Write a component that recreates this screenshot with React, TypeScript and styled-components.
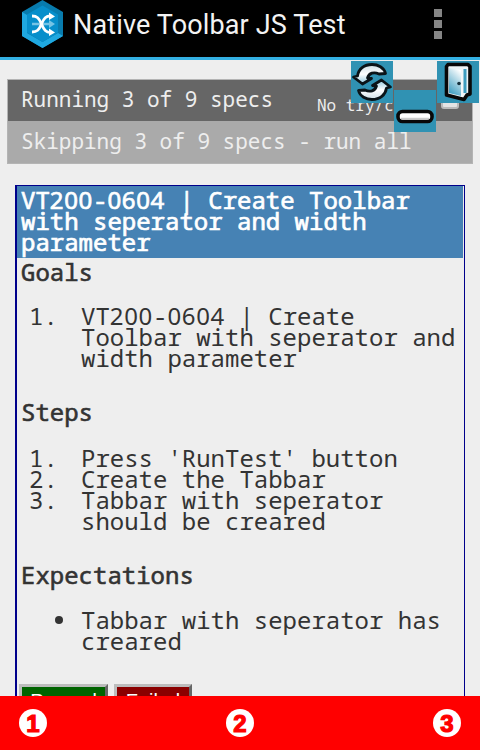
import React from "react";
import styled, { createGlobalStyle } from "styled-components";

const GlobalStyle = createGlobalStyle`
  * { box-sizing: border-box; }
  html, body { margin: 0; padding: 0; background: #eee; overflow: hidden; }
`;

const mono = `"Droid Sans Mono", "Noto Sans Mono", "DejaVu Sans Mono", monospace`;

const Screen = styled.div`
  position: relative;
  display: flex;
  flex-direction: column;
  width: 480px;
  height: 750px;
  overflow: hidden;
  background: #eee;
  color: #333;
  font-family: ${mono};
`;

const ActionBar = styled.header`
  flex: none;
  display: flex;
  align-items: flex-start;
  height: 60px;
  padding-left: 21px;
  background: #000;
  border-bottom: 3px solid #33b0e3;
`;

const AppIcon = styled.svg`
  flex: none;
  width: 43px;
  height: 48px;
`;

const AppTitle = styled.h1`
  flex: 1;
  margin: 0 0 0 9px;
  font: 400 27px/51px Roboto, sans-serif;
  letter-spacing: 0.14px;
  color: #f3f3f3;
  white-space: nowrap;
`;

const Overflow = styled.div`
  display: flex;
  flex-direction: column;
  gap: 3px;
  margin: 9px 38px 0 0;
`;

const Dot = styled.i`
  width: 8px;
  height: 8px;
  background: #858585;
`;

const Page = styled.main`
  flex: 1;
  min-height: 0;
  overflow: hidden;
  padding: 19px 15px 0;
`;

const Banner = styled.section`
  margin: 0 -8px;
  height: 85px;
  border: 1px solid #b4b4b4;
`;

const BannerRow = styled.div<{ $skipped?: boolean }>`
  display: flex;
  justify-content: space-between;
  height: ${(p) => (p.$skipped ? 42 : 41)}px;
  padding: 0 12px 0 13px;
  background: ${(p) => (p.$skipped ? "#aaa" : "#666")};
  color: #eee;
  font-size: 21px;
  line-height: ${(p) => (p.$skipped ? 40 : 38)}px;
  white-space: nowrap;
`;

const TryCatch = styled.label`
  display: flex;
  gap: 7px;
  width: 143px;
  font-size: 16px;
  line-height: 50px;
`;

const Check = styled.span`
  flex: none;
  width: 18px;
  height: 18px;
  margin: 11px 0 0 2px;
  border: 2px solid #bbb;
  border-radius: 3px;
  background: #e4e4e4;
`;

const Spec = styled.article`
  height: 620px;
  margin-top: 21px;
  border: 1px solid #00008b;
  border-left-width: 2px;
  font-size: 24px;
  line-height: 21px;
  white-space: nowrap;
`;

const SpecTitle = styled.h2`
  margin: 0 1px 0 0;
  height: 72px;
  padding: 3px 4px 0;
  background: #4682b4;
  color: #fff;
  font-size: 24px;
  font-weight: 400;
  -webkit-text-stroke: 0.7px #fff;
`;

const Heading = styled.h3<{ $before: number; $after: number }>`
  margin: ${(p) => p.$before}px 0 ${(p) => p.$after}px 4px;
  font-size: 24px;
  font-weight: 400;
  -webkit-text-stroke: 0.6px #333;
`;

const List = styled.ul`
  margin: 0;
  padding: 0;
  list-style: none;
`;

const Item = styled.li`
  display: grid;
  grid-template-columns: 64px 1fr;
`;

const Marker = styled.span`
  padding-left: 12px;
`;

const Bullet = styled.span`
  width: 8px;
  height: 8px;
  margin: 7px 0 0 38px;
  border-radius: 50%;
  background: #333;
`;

const Digits = styled.span`
  font-family: "Noto Sans", sans-serif;
  letter-spacing: 0.028em;
  line-height: 0;
`;

const Buttons = styled.div`
  display: flex;
  gap: 6px;
  margin: 33px 0 0 2px;
`;

const Verdict = styled.button<{ $bg: string; $w: number }>`
  width: ${(p) => p.$w}px;
  height: 34px;
  padding: 0;
  border: 3px solid;
  border-color: #bdbdbd #666 #666 #bdbdbd;
  background: ${(p) => p.$bg};
  color: #fff;
  font: 20px/26px "Liberation Sans", sans-serif;
`;

const TabBar = styled.footer`
  flex: none;
  display: flex;
  justify-content: space-between;
  height: 54px;
  padding: 13px 19px;
  background: #f00;
`;

const Tab = styled.span`
  width: 28px;
  height: 28px;
  border-radius: 50%;
  background: #fff;
  color: #f00;
  font: 700 24px/29px "Liberation Sans", sans-serif;
  -webkit-text-stroke: 1.2px #f00;
  text-align: center;
`;

const Tool = styled.div<{ $x: number; $y: number }>`
  position: absolute;
  left: ${(p) => p.$x}px;
  top: ${(p) => p.$y}px;
  width: 42px;
  height: 42px;
  background: #3092b3;
  svg { display: block; }
`;

const CycleArrow =
  "M2.500 16 L6.500 15 C7.500 8 13 3.500 21 3.500 C27 3.500 33 6.500 34.500 12.500 L28 13 C23 10.500 18 12 16.500 17 L20.500 17.500 L11.500 23 Z";

export default function App() {
  return (
    <Screen>
      <GlobalStyle />
      <ActionBar>
        <AppIcon viewBox="0 0 43 48">
          <path d="M21.500 0 42 12v24L21.500 48 1 36V12Z" fill="#087bad" />
          <path d="M1 12l5 3v18l15.500 9L37 33l5 3-20.500 12L1 36Z" fill="#1fa8e0" />
          <path d="M21.500 5.500 37 14.500v18l-15.500 9.500L6 32.500v-18Z" fill="#078fcb" />
          <path d="M11 24H29" stroke="#75c4e5" strokeWidth="2.500" />
          <path d="M28 20l6 4-6 4Z" fill="#75c4e5" />
          <path
            d="M11 16c5 0 7 2 9.500 8s4.500 8.500 9 8.500M11 32c5 0 7-2 9.500-8s4.500-8 9-8"
            fill="none" stroke="#fff" strokeWidth="2.800"
          />
          <path d="M28 12.500l6 4-6 3.500ZM28 28.500l6 4-6 3.500Z" fill="#fff" />
        </AppIcon>
        <AppTitle>Native Toolbar JS Test</AppTitle>
        <Overflow><Dot /><Dot /><Dot /></Overflow>
      </ActionBar>
      <Page>
        <Banner>
          <BannerRow>
            <span>Running 3 of 9 specs</span>
            <TryCatch>No try/catch<Check /></TryCatch>
          </BannerRow>
          <BannerRow $skipped>Skipping 3 of 9 specs - run all</BannerRow>
        </Banner>
        <Spec>
          <SpecTitle>
            VT<Digits>200</Digits>-<Digits>0604</Digits> | Create Toolbar<br />
            with seperator and width<br />
            parameter
          </SpecTitle>
          <Heading $before={3} $after={23}>Goals</Heading>
          <List as="ol">
            <Item>
              <Marker>1.</Marker>
              <span>
                VT<Digits>200</Digits>-<Digits>0604</Digits> | Create<br />
                Toolbar with seperator and<br />
                width parameter
              </span>
            </Item>
          </List>
          <Heading $before={33} $after={25}>Steps</Heading>
          <List as="ol">
            <Item><Marker>1.</Marker><span>Press 'RunTest' button</span></Item>
            <Item><Marker>2.</Marker><span>Create the Tabbar</span></Item>
            <Item><Marker>3.</Marker><span>Tabbar with seperator<br />should be creared</span></Item>
          </List>
          <Heading $before={33} $after={24}>Expectations</Heading>
          <List>
            <Item><Bullet /><span>Tabbar with seperator has<br />creared</span></Item>
          </List>
          <Buttons>
            <Verdict $bg="#006400" $w={89}>Passed</Verdict>
            <Verdict $bg="#8b0000" $w={78}>Failed</Verdict>
          </Buttons>
        </Spec>
      </Page>
      <TabBar><Tab>1</Tab><Tab>2</Tab><Tab>3</Tab></TabBar>
      <Tool $x={351} $y={61}>
        <svg width="42" height="42" viewBox="0 0 42 42">
          <defs>
            <linearGradient id="silver" x1="0" y1="0" x2="0" y2="1">
              <stop offset="0" stopColor="#cfdfe5" />
              <stop offset="0.5" stopColor="#fff" />
              <stop offset="1" stopColor="#8fc6dc" />
            </linearGradient>
          </defs>
          <g fill="url(#silver)" stroke="#0b1418" strokeWidth="2.800" strokeLinejoin="round">
            <path d={CycleArrow} />
            <path d={CycleArrow} transform="rotate(180 21 21)" />
          </g>
        </svg>
      </Tool>
      <Tool $x={394} $y={90}>
        <svg width="42" height="42" viewBox="0 0 42 42">
          <rect x="4" y="21.500" width="34" height="10" rx="4.500" fill="#fff" stroke="#080808" strokeWidth="3.600" />
          <path d="M7 28.500H35" stroke="#ccc" strokeWidth="1.500" />
        </svg>
      </Tool>
      <Tool $x={437} $y={61}>
        <svg width="42" height="42" viewBox="0 0 42 42">
          <defs>
            <linearGradient id="door" x1="0.700" y1="0" x2="0.300" y2="1">
              <stop offset="0" stopColor="#fff" />
              <stop offset="1" stopColor="#3d9dc0" />
            </linearGradient>
          </defs>
          <path d="M11 3.500H31L33 5.500V33L30 34L27 38.500L9.500 34V5.500Z" fill="#eef4f6" stroke="#080808" strokeWidth="3.600" strokeLinejoin="round" />
          <path d="M12 7L24 9V35L12 32Z" fill="url(#door)" />
          <path d="M28 8V32" stroke="#3d9dc0" strokeWidth="3" />
          <path d="M25 8V36" stroke="#f4f8fa" strokeWidth="1.500" />
          <circle cx="22" cy="22.500" r="1.800" fill="#16303c" />
        </svg>
      </Tool>
    </Screen>
  );
}
